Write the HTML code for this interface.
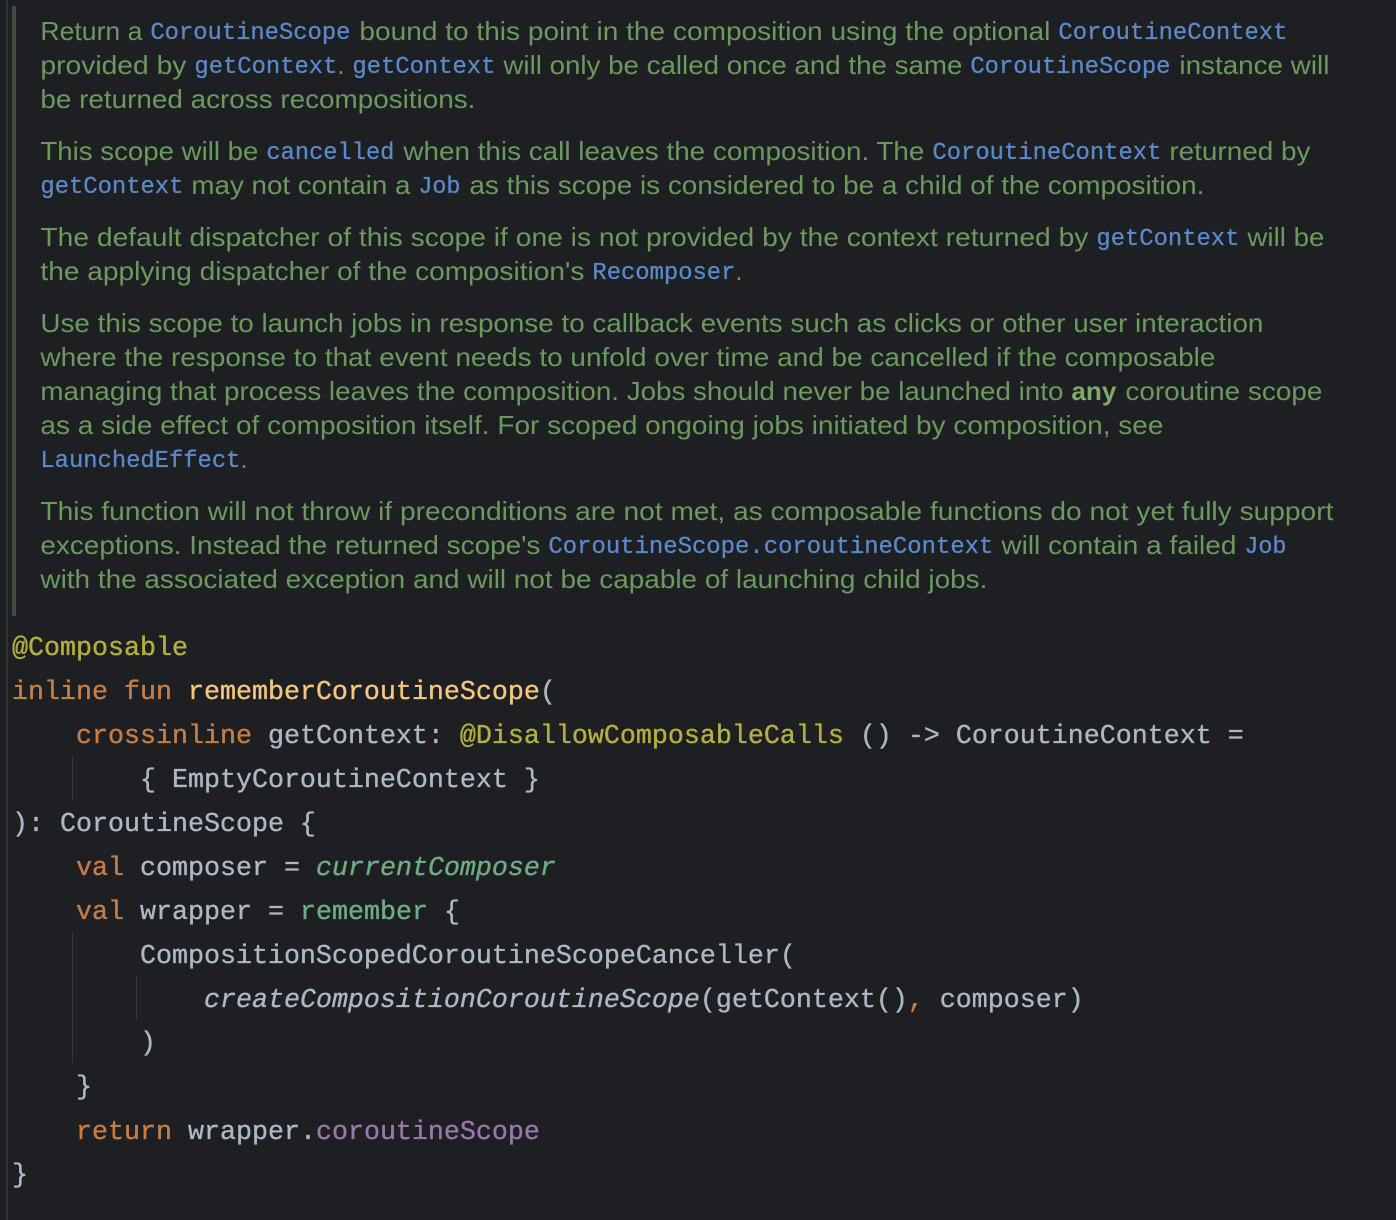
<!DOCTYPE html>
<html lang="en"><head><meta charset="utf-8"><title>rememberCoroutineScope</title>
<style>
html,body{margin:0;padding:0;background:#1e1f22;width:1396px;height:1220px;overflow:hidden}
svg{display:block}
text{white-space:pre}
.d{font:25.6px "Liberation Sans",sans-serif;fill:#6c9a5e}
.b{font-weight:bold;fill:#7dab6c}
.m{font:23.8px "Liberation Mono",monospace;fill:#5a89cc;stroke:#5a89cc;stroke-width:.3px;transform:translateY(-1px)}
.c{font:26.67px "Liberation Mono",monospace;fill:#adb8c6;stroke:#adb8c6;stroke-width:.35px;transform:translateY(-1px)}
.k{fill:#c67d45;stroke:#c67d45}.a{fill:#b5b03e;stroke:#b5b03e}.f{fill:#f5c67f;stroke:#f5c67f}.g{fill:#6fae80;stroke:#6fae80}.p{fill:#9a77ad;stroke:#9a77ad}.i{font-style:italic}
</style></head><body>
<svg width="1396" height="1220" viewBox="0 0 1396 1220" xmlns="http://www.w3.org/2000/svg">
<rect width="1396" height="1220" fill="#1e1f22"/>
<rect x="6" y="0" width="2" height="1220" fill="#313236"/>
<rect x="12" y="6" width="4" height="610" fill="#3d4f3b"/>
<rect x="72" y="756" width="1" height="44" fill="#36373b"/>
<rect x="72" y="932" width="1" height="131" fill="#36373b"/>
<rect x="136" y="976" width="1" height="44" fill="#36373b"/>

<g transform="translate(-0.6 0)">
<text class="d" x="41" y="40" textLength="102" lengthAdjust="spacingAndGlyphs">Return a</text>
<text class="m" x="151" y="40" textLength="200" lengthAdjust="spacingAndGlyphs">CoroutineScope</text>
<text class="d" x="360" y="40" textLength="691" lengthAdjust="spacingAndGlyphs">bound to this point in the composition using the optional</text>
<text class="m" x="1059" y="40" textLength="229" lengthAdjust="spacingAndGlyphs">CoroutineContext</text>

<text class="d" x="41" y="74" textLength="146" lengthAdjust="spacingAndGlyphs">provided by</text>
<text class="m" x="195" y="74" textLength="143" lengthAdjust="spacingAndGlyphs">getContext</text>
<text class="d" x="338" y="74">.</text>
<text class="m" x="353" y="74" textLength="143" lengthAdjust="spacingAndGlyphs">getContext</text>
<text class="d" x="504" y="74" textLength="459" lengthAdjust="spacingAndGlyphs">will only be called once and the same</text>
<text class="m" x="971" y="74" textLength="200" lengthAdjust="spacingAndGlyphs">CoroutineScope</text>
<text class="d" x="1180" y="74" textLength="150" lengthAdjust="spacingAndGlyphs">instance will</text>

<text class="d" x="41" y="108" textLength="435" lengthAdjust="spacingAndGlyphs">be returned across recompositions.</text>

<text class="d" x="41" y="160" textLength="218" lengthAdjust="spacingAndGlyphs">This scope will be</text>
<text class="m" x="267" y="160" textLength="128" lengthAdjust="spacingAndGlyphs">cancelled</text>
<text class="d" x="404" y="160" textLength="521" lengthAdjust="spacingAndGlyphs">when this call leaves the composition. The</text>
<text class="m" x="933" y="160" textLength="229" lengthAdjust="spacingAndGlyphs">CoroutineContext</text>
<text class="d" x="1170" y="160" textLength="141" lengthAdjust="spacingAndGlyphs">returned by</text>

<text class="m" x="41" y="194" textLength="143" lengthAdjust="spacingAndGlyphs">getContext</text>
<text class="d" x="192" y="194" textLength="219" lengthAdjust="spacingAndGlyphs">may not contain a</text>
<text class="m" x="419" y="194" textLength="42" lengthAdjust="spacingAndGlyphs">Job</text>
<text class="d" x="470" y="194" textLength="735" lengthAdjust="spacingAndGlyphs">as this scope is considered to be a child of the composition.</text>

<text class="d" x="41" y="246" textLength="1048" lengthAdjust="spacingAndGlyphs">The default dispatcher of this scope if one is not provided by the context returned by</text>
<text class="m" x="1097" y="246" textLength="143" lengthAdjust="spacingAndGlyphs">getContext</text>
<text class="d" x="1248" y="246" textLength="77" lengthAdjust="spacingAndGlyphs">will be</text>

<text class="d" x="41" y="280" textLength="544" lengthAdjust="spacingAndGlyphs">the applying dispatcher of the composition's</text>
<text class="m" x="593" y="280" textLength="143" lengthAdjust="spacingAndGlyphs">Recomposer</text>
<text class="d" x="736" y="280">.</text>

<text class="d" x="41" y="332" textLength="1223" lengthAdjust="spacingAndGlyphs">Use this scope to launch jobs in response to callback events such as clicks or other user interaction</text>
<text class="d" x="41" y="366" textLength="1175" lengthAdjust="spacingAndGlyphs">where the response to that event needs to unfold over time and be cancelled if the composable</text>
<text class="d" x="41" y="400" textLength="1023" lengthAdjust="spacingAndGlyphs">managing that process leaves the composition. Jobs should never be launched into</text>
<text class="d b" x="1072" y="400" textLength="45" lengthAdjust="spacingAndGlyphs">any</text>
<text class="d" x="1126" y="400" textLength="197" lengthAdjust="spacingAndGlyphs">coroutine scope</text>
<text class="d" x="41" y="434" textLength="1123" lengthAdjust="spacingAndGlyphs">as a side effect of composition itself. For scoped ongoing jobs initiated by composition, see</text>
<text class="m" x="41" y="468" textLength="200" lengthAdjust="spacingAndGlyphs">LaunchedEffect</text>
<text class="d" x="241" y="468">.</text>

<text class="d" x="41" y="520" textLength="1293" lengthAdjust="spacingAndGlyphs">This function will not throw if preconditions are not met, as composable functions do not yet fully support</text>
<text class="d" x="41" y="554" textLength="500" lengthAdjust="spacingAndGlyphs">exceptions. Instead the returned scope's</text>
<text class="m" x="549" y="554" textLength="445" lengthAdjust="spacingAndGlyphs">CoroutineScope.coroutineContext</text>
<text class="d" x="1002" y="554" textLength="235" lengthAdjust="spacingAndGlyphs">will contain a failed</text>
<text class="m" x="1245" y="554" textLength="42" lengthAdjust="spacingAndGlyphs">Job</text>
<text class="d" x="41" y="588" textLength="947" lengthAdjust="spacingAndGlyphs">with the associated exception and will not be capable of launching child jobs.</text>
</g>

<text class="c a" x="12" y="656">@Composable</text>
<text class="c" x="12" y="700"><tspan class="k">inline fun</tspan> <tspan class="f">rememberCoroutineScope</tspan>(</text>
<text class="c" x="12" y="744">    <tspan class="k">crossinline</tspan> getContext: <tspan class="a">@DisallowComposableCalls</tspan> () -&gt; CoroutineContext =</text>
<text class="c" x="12" y="788">        { EmptyCoroutineContext }</text>
<text class="c" x="12" y="832">): CoroutineScope {</text>
<text class="c" x="12" y="876">    <tspan class="k">val</tspan> composer = <tspan class="g i">currentComposer</tspan></text>
<text class="c" x="12" y="920">    <tspan class="k">val</tspan> wrapper = <tspan class="g">remember</tspan> {</text>
<text class="c" x="12" y="964">        CompositionScopedCoroutineScopeCanceller(</text>
<text class="c" x="12" y="1008">            <tspan class="i">createCompositionCoroutineScope</tspan>(getContext()<tspan class="k">,</tspan> composer)</text>
<text class="c" x="12" y="1051">        )</text>
<text class="c" x="12" y="1095">    }</text>
<text class="c" x="12" y="1140">    <tspan class="k">return</tspan> wrapper.<tspan class="p">coroutineScope</tspan></text>
<text class="c" x="12" y="1183">}</text>
</svg>
</body></html>
